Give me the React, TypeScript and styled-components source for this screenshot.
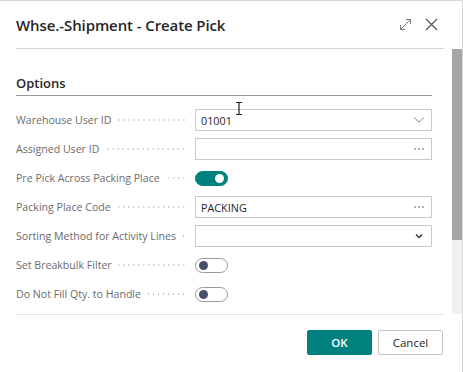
import React from "react";
import styled, { createGlobalStyle } from "styled-components";

const GlobalStyle = createGlobalStyle`
  html, body {
    margin: 0;
    padding: 0;
    background: #ffffff;
  }
  body {
    font-family: "Segoe UI", "Open Sans", "Noto Sans", sans-serif;
    color: #212121;
  }
`;

const Dialog = styled.div`
  position: relative;
  width: 463px;
  height: 372px;
  box-sizing: border-box;
  border-top: 1px solid #d6d6d6;
  border-right: 1px solid #d6d6d6;
  background: #fff;
  display: flex;
  flex-direction: column;
  overflow: hidden;
`;

const Header = styled.div`
  height: 47px;
  display: flex;
  align-items: center;
  padding: 0 24px 0 16px;
`;

const Title = styled.h1`
  flex: 1;
  margin: 0;
  font-size: 15px;
  font-weight: 600;
  letter-spacing: -0.1px;
  color: #262626;
`;

const HeaderIcons = styled.div`
  display: flex;
  align-items: center;
  gap: 13px;
`;

const Rule = styled.div<{ $color?: string }>`
  height: 1px;
  margin: 0 18px 0 16px;
  background: ${(p) => p.$color ?? "#d3d7db"};
`;

const Body = styled.div`
  height: 265px;
  display: flex;
`;

const Content = styled.div`
  flex: 1;
  padding: 24px 20px 0 16px;
  overflow: hidden;
`;

const Scrollbar = styled.div`
  width: 10px;
  display: flex;
  flex-direction: column;
  background: #f0f0f0;
`;

const Thumb = styled.div`
  height: 191px;
  background: #a6a6a6;
`;

const SectionTitle = styled.h2`
  margin: 0 0 13px;
  font-size: 13px;
  line-height: 20px;
  font-weight: 600;
  color: #262626;
  padding-bottom: 2px;
  border-bottom: 1px solid #9a9a9a;
`;

const Fields = styled.div`
  display: flex;
  flex-direction: column;
  gap: 7px;
`;

const Row = styled.div`
  display: grid;
  grid-template-columns: 179px 1fr;
  height: 22px;
  align-items: center;
`;

const Label = styled.div`
  display: flex;
  align-items: center;
  padding-right: 9px;
  font-size: 10.6px;
  color: #6b6b6b;
  white-space: nowrap;
`;

const Leader = styled.span`
  flex: 1;
  height: 4px;
  margin-left: 6px;
  background-image: radial-gradient(circle, #c2c2c2 0.7px, transparent 1px);
  background-size: 5px 4px;
  background-repeat: repeat-x;
  background-position: right center;
`;

const Input = styled.div`
  height: 22px;
  box-sizing: border-box;
  border: 1px solid #c8c8c8;
  display: flex;
  align-items: center;
  padding: 0 6px 0 5px;
  font-size: 10.8px;
  color: #262626;
`;

const InputText = styled.span`
  flex: 1;
`;

const Toggle = styled.div<{ $on?: boolean }>`
  width: 33px;
  height: 15px;
  box-sizing: border-box;
  border-radius: 8px;
  display: flex;
  align-items: center;
  padding: 0 3px;
  justify-content: ${(p) => (p.$on ? "flex-end" : "flex-start")};
  background: ${(p) => (p.$on ? "#00807f" : "#fff")};
  border: 1px solid ${(p) => (p.$on ? "#00807f" : "#9a9a9a")};

  &::after {
    content: "";
    width: 9px;
    height: 9px;
    border-radius: 50%;
    background: ${(p) => (p.$on ? "#fff" : "#46506a")};
  }
`;

const Footer = styled.div`
  display: flex;
  justify-content: flex-end;
  gap: 6px;
  padding: 15px 19px 0 0;
`;

const Button = styled.button<{ $primary?: boolean }>`
  width: 65px;
  height: 25px;
  box-sizing: border-box;
  font-family: inherit;
  font-size: 11.5px;
  font-weight: ${(p) => (p.$primary ? 600 : 400)};
  border-radius: 2px;
  border: 1px solid ${(p) => (p.$primary ? "#00807f" : "#c4c4c4")};
  background: ${(p) => (p.$primary ? "#00807f" : "#fff")};
  color: ${(p) => (p.$primary ? "#fff" : "#262626")};
  padding: 0;
`;

const Cursor = styled.svg`
  position: absolute;
  left: 235px;
  top: 101px;
`;

const Chevron = ({ dark }: { dark?: boolean }) => (
  <svg width="12" height="8" viewBox="0 0 12 8">
    <path
      d={dark ? "M3 2.5 L6 5.5 L9 2.5" : "M1 1.5 L6 6 L11 1.5"}
      fill="none"
      stroke={dark ? "#333" : "#8a8a8a"}
      strokeWidth={dark ? 1.4 : 1}
    />
  </svg>
);

const Ellipsis = () => (
  <svg width="12" height="4" viewBox="0 0 12 4">
    <circle cx="2" cy="2" r="0.8" fill="#555" />
    <circle cx="6" cy="2" r="0.8" fill="#555" />
    <circle cx="10" cy="2" r="0.8" fill="#555" />
  </svg>
);

const fields = [
  { label: "Warehouse User ID", kind: "select", value: "01001" },
  { label: "Assigned User ID", kind: "lookup", value: "" },
  { label: "Pre Pick Across Packing Place", kind: "toggle", on: true },
  { label: "Packing Place Code", kind: "lookup", value: "PACKING" },
  { label: "Sorting Method for Activity Lines", kind: "selectDark", value: "" },
  { label: "Set Breakbulk Filter", kind: "toggle", on: false },
  { label: "Do Not Fill Qty. to Handle", kind: "toggle", on: false },
];

export default function App() {
  return (
    <>
      <GlobalStyle />
      <Dialog>
        <Header>
          <Title>Whse.-Shipment - Create Pick</Title>
          <HeaderIcons>
            <svg width="13" height="13" viewBox="0 0 13 13">
              <path
                d="M1.5 11.5 L11.5 1.5 M7 1.5 H11.5 V6 M1.5 7 V11.5 H6"
                fill="none"
                stroke="#7a7a7a"
                strokeWidth="1"
              />
            </svg>
            <svg width="13" height="13" viewBox="0 0 13 13">
              <path d="M1 1 L12 12 M12 1 L1 12" fill="none" stroke="#555" strokeWidth="1.2" />
            </svg>
          </HeaderIcons>
        </Header>
        <Rule />
        <Body>
          <Content>
            <SectionTitle>Options</SectionTitle>
            <Fields>
              {fields.map((f) => (
                <Row key={f.label}>
                  <Label>
                    {f.label}
                    <Leader />
                  </Label>
                  {f.kind === "toggle" ? (
                    <Toggle $on={f.on} />
                  ) : (
                    <Input>
                      <InputText>{f.value}</InputText>
                      {f.kind === "select" && <Chevron />}
                      {f.kind === "selectDark" && <Chevron dark />}
                      {f.kind === "lookup" && <Ellipsis />}
                    </Input>
                  )}
                </Row>
              ))}
            </Fields>
          </Content>
          <Scrollbar>
            <Thumb />
          </Scrollbar>
        </Body>
        <Rule $color="#e3e3e3" />
        <Footer>
          <Button $primary>OK</Button>
          <Button>Cancel</Button>
        </Footer>
        <Cursor width="8" height="13" viewBox="0 0 8 13">
          <path d="M1 0.5 H7 M4 0.5 V12.5 M1 12.5 H7" stroke="#222" strokeWidth="1.2" fill="none" />
        </Cursor>
      </Dialog>
    </>
  );
}
